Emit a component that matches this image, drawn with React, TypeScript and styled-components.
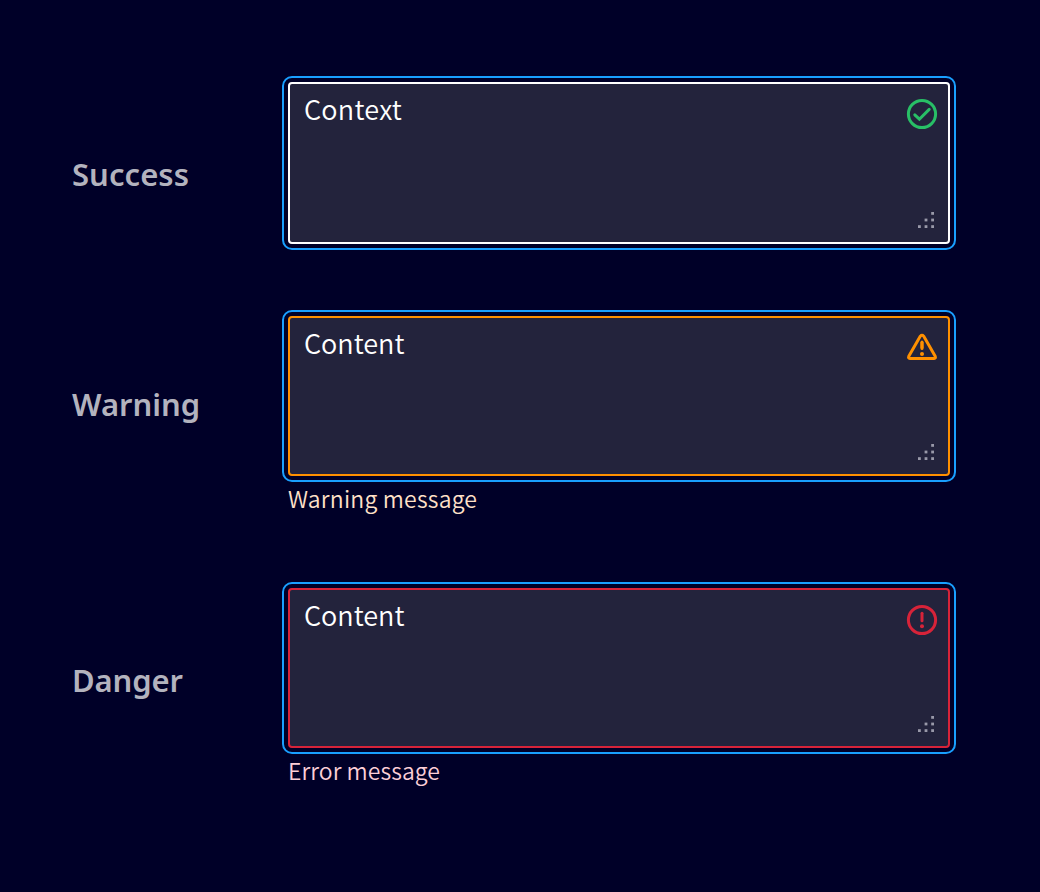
import React from 'react';
import styled, { createGlobalStyle } from 'styled-components';

const GlobalStyle = createGlobalStyle`
  * { box-sizing: border-box; }
  body {
    margin: 0;
    background: #000028;
    font-family: "Noto Sans", sans-serif;
  }
`;

const Page = styled.main`
  width: 1040px;
  height: 892px;
  padding: 76px 0 0 72px;
  background: #000028;
`;

const Row = styled.section<{ $gap: number }>`
  display: flex;
  align-items: flex-start;
  margin-bottom: ${p => p.$gap}px;
`;

const Label = styled.h2<{ $offset: number; $spacing: number }>`
  width: 210px;
  margin: 0;
  padding-top: ${p => p.$offset}px;
  color: #b3b3be;
  font-size: 31px;
  font-weight: 600;
  line-height: 44px;
  letter-spacing: ${p => p.$spacing}px;
`;

const Field = styled.div`
  display: flex;
  flex-direction: column;
  width: 674px;
`;

const FocusRing = styled.div`
  padding: 4px;
  border: 2px solid #199fff;
  border-radius: 10px;
`;

const TextBox = styled.div<{ $color: string; $height: number }>`
  display: flex;
  justify-content: space-between;
  height: ${p => p.$height}px;
  padding: 8px 10px 14px 14px;
  border: 2px solid ${p => p.$color};
  border-radius: 4px;
  background: #23233c;
`;

const Value = styled.span<{ $spacing: number }>`
  color: #fff;
  font-family: "Noto Sans CJK SC", "Noto Sans", sans-serif;
  font-size: 27px;
  font-weight: 350;
  line-height: 34px;
  letter-spacing: ${p => p.$spacing}px;
`;

const Adornments = styled.div`
  display: flex;
  flex-direction: column;
  justify-content: space-between;
  align-items: flex-end;
  padding-top: 6px;
`;

const StatusSvg = styled.svg`
  display: block;
  fill: none;
  stroke-width: 3;
  stroke-linecap: round;
  stroke-linejoin: round;
`;

const GripSvg = styled.svg`
  display: block;
  margin-right: 4px;
  fill: #9999a9;
`;

const Message = styled.p<{ $color: string; $spacing: number }>`
  margin: 0;
  padding-left: 6px;
  height: 34px;
  color: ${p => p.$color};
  font-family: "Noto Sans CJK SC", "Noto Sans", sans-serif;
  font-size: 23px;
  font-weight: 350;
  line-height: 32px;
  letter-spacing: ${p => p.$spacing}px;
`;

type Status = 'success' | 'warning' | 'danger';

const iconColors: Record<Status, string> = {
  success: '#28bf66',
  warning: '#ff9000',
  danger: '#d72339',
};

const StatusIcon = ({ status }: { status: Status }) => {
  const color = iconColors[status];
  return (
    <StatusSvg width="32" height="32" viewBox="0 0 32 32" stroke={color}>
      {status === 'success' && (
        <>
          <circle cx="16" cy="16" r="13.6" />
          <path d="M8.8 16.8 13.4 21.2 23.2 11.4" strokeLinejoin="miter" />
        </>
      )}
      {status === 'warning' && (
        <>
          <path d="M14.4 4.1 2.8 24.2Q1.9 26.5 4 26.6H28Q30.1 26.5 29.2 24.2L17.6 4.1Q16 2.2 14.4 4.1Z" />
          <path d="M16 10v6.2" strokeLinecap="butt" />
          <path d="M16 10v6.6" />
          <circle cx="16" cy="22" r="2" fill={color} stroke="none" />
        </>
      )}
      {status === 'danger' && (
        <>
          <circle cx="16" cy="16" r="13.6" />
          <path d="M16 9.2v7.6" />
          <circle cx="16" cy="22.3" r="2" fill={color} stroke="none" />
        </>
      )}
    </StatusSvg>
  );
};

const gripDots = [[13.2, 0], [6.6, 6.6], [13.2, 6.6], [0, 13.2], [6.6, 13.2], [13.2, 13.2]];

const ResizeGrip = () => (
  <GripSvg width="16" height="16" viewBox="0 0 16 16">
    {gripDots.map(([x, y]) => (
      <rect key={`${x}-${y}`} x={x} y={y} width="2.8" height="2.8" />
    ))}
  </GripSvg>
);

interface Example {
  status: Status;
  label: string;
  labelOffset: number;
  labelSpacing: number;
  value: string;
  valueSpacing: number;
  border: string;
  height: number;
  gap: number;
  message?: string;
  messageColor?: string;
  messageSpacing?: number;
}

const examples: Example[] = [
  { status: 'success', label: 'Success', labelOffset: 76, labelSpacing: 0.05, value: 'Context', valueSpacing: 0.25, border: '#ffffff', height: 162, gap: 60 },
  { status: 'warning', label: 'Warning', labelOffset: 72, labelSpacing: 0, value: 'Content', valueSpacing: 0, border: '#ff9000', height: 160, gap: 66, message: 'Warning message', messageColor: '#ffe0c8', messageSpacing: 0.2 },
  { status: 'danger', label: 'Danger', labelOffset: 76, labelSpacing: -0.15, value: 'Content', valueSpacing: 0, border: '#d72339', height: 160, gap: 0, message: 'Error message', messageColor: '#fccfd7', messageSpacing: 0.05 },
];

export default function App() {
  return (
    <>
      <GlobalStyle />
      <Page>
        {examples.map(e => (
          <Row key={e.status} $gap={e.gap}>
            <Label $offset={e.labelOffset} $spacing={e.labelSpacing}>{e.label}</Label>
            <Field>
              <FocusRing>
                <TextBox $color={e.border} $height={e.height}>
                  <Value $spacing={e.valueSpacing}>{e.value}</Value>
                  <Adornments>
                    <StatusIcon status={e.status} />
                    <ResizeGrip />
                  </Adornments>
                </TextBox>
              </FocusRing>
              {e.message && (
                <Message $color={e.messageColor!} $spacing={e.messageSpacing!}>{e.message}</Message>
              )}
            </Field>
          </Row>
        ))}
      </Page>
    </>
  );
}
